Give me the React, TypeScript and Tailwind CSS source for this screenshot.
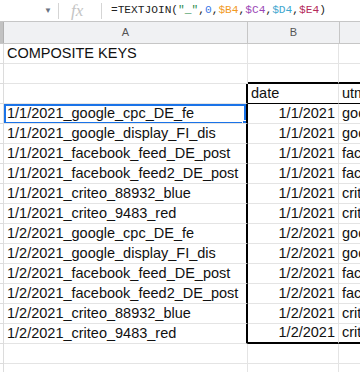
import React from 'react';

type Row = { a?: string; b?: string; c?: string; kind?: 'head' | 'data' | 'last' };

const sources = ['google', 'google', 'facebook', 'facebook', 'criteo', 'criteo'];
const keys = [
  'google_cpc_DE_fe',
  'google_display_FI_dis',
  'facebook_feed_DE_post',
  'facebook_feed2_DE_post',
  'criteo_88932_blue',
  'criteo_9483_red',
];

const dataRows: Row[] = ['1/1/2021', '1/2/2021'].flatMap((d) =>
  keys.map((k, i) => ({ a: `${d}_${k}`, b: d, c: sources[i], kind: 'data' as const }))
);
dataRows[dataRows.length - 1].kind = 'last';

const rows: Row[] = [
  { a: 'COMPOSITE KEYS' },
  {},
  { b: 'date', c: 'utm_source', kind: 'head' },
  ...dataRows,
  {},
  {},
];

const FormulaBar = () => (
  <div className="h-[21px] flex items-center bg-white">
    <div className="w-[44px]" />
    <span className="text-[8px] text-gray-500">▼</span>
    <div className="w-px h-[16px] bg-[#d5d5d5] ml-[6px]" />
    <span
      className="ml-[12px] w-[30px] text-[17px] italic text-[#c4c4c4]"
      style={{ fontFamily: '"Liberation Serif", serif' }}
    >
      fx
    </span>
    <div className="w-px h-[16px] bg-[#d5d5d5]" />
    <span
      className="ml-[9px] text-[11.2px] text-[#222]"
      style={{ fontFamily: '"Liberation Mono", monospace' }}
    >
      =TEXTJOIN(<span className="text-[#2a8a4a]">"_"</span>,
      <span className="text-[#3b78e7]">0</span>,
      <span className="text-[#f29a1f]">$B4</span>,
      <span className="text-[#9b47b6]">$C4</span>,
      <span className="text-[#3fa7cf]">$D4</span>,
      <span className="text-[#b52a5a]">$E4</span>)
    </span>
  </div>
);

const ColumnHeaders = () => (
  <div className="flex h-[23px] bg-[#f0f1f3] border-y border-[#c6c6c6] text-[11px] text-[#555]">
    <div className="w-[4px] bg-[#c2c2c2] border-r border-[#b0b0b0]" />
    <div className="w-[244px] flex items-center justify-center border-r border-[#c6c6c6]">A</div>
    <div className="w-[92px] flex items-center justify-center border-r border-[#c6c6c6]">B</div>
    <div className="flex-1" />
  </div>
);

const Grid = () => (
  <div className="text-[14.5px] text-[#111]">
    {rows.map((r, i) => {
      const inBox = r.kind === 'head' || r.kind === 'data' || r.kind === 'last';
      const aboveBox = rows[i + 1]?.kind === 'head';
      const selected = i === 3;
      const boxBottom = r.kind === 'head' || r.kind === 'last';
      return (
        <div key={i} className="flex h-[20px]">
          <div className="w-[4px] border-r border-b border-[#dcdcdc]" />
          <div
            className={`relative w-[244px] pl-[3px] flex items-center whitespace-nowrap overflow-hidden border-b border-[#e4e4e4] ${
              inBox ? 'border-r-2 border-r-black' : 'border-r border-r-[#e4e4e4]'
            }`}
          >
            {r.a}
            {selected && (
              <div className="absolute inset-0 -bottom-px border-2 border-[#1a73e8]">
                <div className="absolute -right-[4px] -bottom-[4px] w-[6px] h-[6px] bg-[#1a73e8] border border-white" />
              </div>
            )}
          </div>
          <div
            className={`w-[91px] px-[3px] flex items-center whitespace-nowrap border-r border-r-[#e4e4e4] ${
              r.kind === 'head' ? 'justify-start' : 'justify-end'
            } ${
              aboveBox || boxBottom ? (r.kind === 'last' || aboveBox ? 'border-b-2 border-b-black' : 'border-b border-b-black') : 'border-b border-b-[#e4e4e4]'
            }`}
          >
            {r.b}
          </div>
          <div
            className={`flex-1 pl-[3px] flex items-center whitespace-nowrap overflow-hidden ${
              aboveBox || boxBottom ? (r.kind === 'last' || aboveBox ? 'border-b-2 border-b-black' : 'border-b border-b-black') : 'border-b border-b-[#e4e4e4]'
            }`}
          >
            {r.c}
          </div>
        </div>
      );
    })}
  </div>
);

export default function App() {
  return (
    <div
      className="w-[360px] h-[372px] overflow-hidden bg-white"
      style={{ fontFamily: '"Liberation Sans", Arial, sans-serif' }}
    >
      <FormulaBar />
      <ColumnHeaders />
      <Grid />
    </div>
  );
}
